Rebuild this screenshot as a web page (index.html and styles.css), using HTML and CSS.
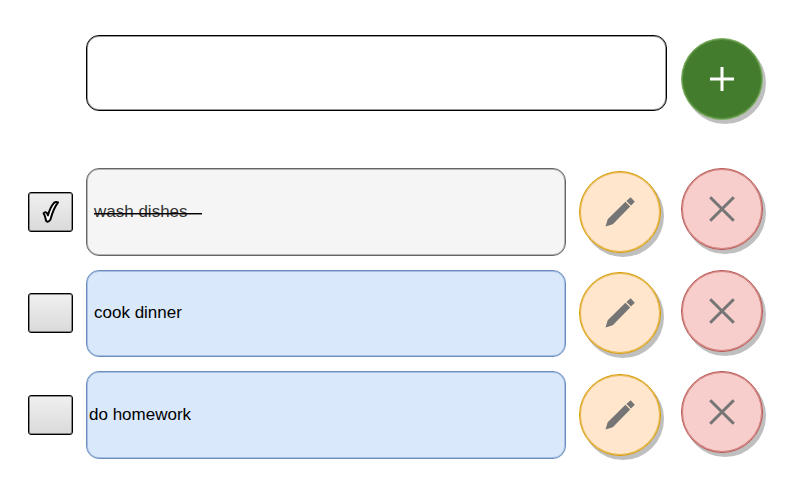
FILE: index.html
```html
<!DOCTYPE html>
<html lang="en">
<head>
<meta charset="utf-8">
<meta name="viewport" content="width=device-width, initial-scale=1">
<title>To-do list</title>
<link rel="stylesheet" href="styles.css">
</head>
<body>
<svg class="symbols" aria-hidden="true">
  <symbol id="tick" viewBox="0 0 18 24">
    <path d="M1.6 13.4C3 11.4 5.2 12 5.9 15.4C7.4 10.2 9.6 5.6 12.2 2.6C13.4 1.8 15 1.8 16 2.4C12.4 7.2 10.2 13 8.6 19C7.8 21.8 4.8 22.6 4 20.4C3.4 18 3.2 15.4 1.6 13.4Z"/>
  </symbol>
  <symbol id="pencil" viewBox="0 0 30 30">
    <path d="M0.5 29.6L2.7 22.3L20.4 4.7L25.2 9.5L7.8 27.2Z M21.4 4L25.6 0.3L29.8 4.8L26 8.6Z"/>
  </symbol>
  <symbol id="cross" viewBox="0 0 26 26">
    <path d="M1.2 1.2L24.8 24.8M24.8 1.2L1.2 24.8"/>
  </symbol>
  <symbol id="plus" viewBox="0 0 24 24">
    <path d="M12 0V24M0 12H24"/>
  </symbol>
</svg>
<main class="app">
  <form class="new-task">
    <input class="new-task-input" type="text" aria-label="New task">
    <button class="round add" type="button" aria-label="Add task"><svg class="icon-plus"><use href="#plus"/></svg></button>
  </form>
  <ul class="tasks">
    <li class="task">
      <span class="check"><input id="task-1" type="checkbox" checked><svg class="tick" aria-hidden="true"><use href="#tick"/></svg></span>
      <div class="card done"><label for="task-1">wash dishes</label></div>
      <div class="actions">
        <button class="round edit" type="button" aria-label="Edit wash dishes"><svg class="icon-pencil"><use href="#pencil"/></svg></button>
        <button class="round delete" type="button" aria-label="Delete wash dishes"><svg class="icon-cross"><use href="#cross"/></svg></button>
      </div>
    </li>
    <li class="task">
      <span class="check"><input id="task-2" type="checkbox"><svg class="tick" aria-hidden="true"><use href="#tick"/></svg></span>
      <div class="card"><label for="task-2">cook dinner</label></div>
      <div class="actions">
        <button class="round edit" type="button" aria-label="Edit cook dinner"><svg class="icon-pencil"><use href="#pencil"/></svg></button>
        <button class="round delete" type="button" aria-label="Delete cook dinner"><svg class="icon-cross"><use href="#cross"/></svg></button>
      </div>
    </li>
    <li class="task">
      <span class="check"><input id="task-3" type="checkbox"><svg class="tick" aria-hidden="true"><use href="#tick"/></svg></span>
      <div class="card tight"><label for="task-3">do homework</label></div>
      <div class="actions">
        <button class="round edit" type="button" aria-label="Edit do homework"><svg class="icon-pencil"><use href="#pencil"/></svg></button>
        <button class="round delete" type="button" aria-label="Delete do homework"><svg class="icon-cross"><use href="#cross"/></svg></button>
      </div>
    </li>
  </ul>
</main>
</body>
</html>
```

FILE: styles.css
```css
* {
  box-sizing: border-box;
}

body {
  margin: 0;
  background: #fff;
  color: #000;
  font-family: "Liberation Sans", Arial, sans-serif;
  font-size: 17px;
  line-height: 20px;
}

.symbols {
  position: absolute;
  width: 0;
  height: 0;
}

.app {
  padding: 35px 29px 22px 28px;
}

.new-task {
  display: flex;
  align-items: flex-start;
  gap: 14px;
  margin: 0 0 48px 58px;
}

.new-task-input {
  flex: 1;
  min-width: 0;
  height: 76px;
  padding: 0 8px;
  border: 1px solid #000;
  border-radius: 13px;
  box-shadow: inset 0 0 0 1px rgba(0, 0, 0, 0.4);
  background: #fff;
  font: inherit;
}

.tasks {
  display: grid;
  grid-auto-rows: 1fr;
  gap: 14px;
  min-height: 291px;
  margin: 0;
  padding: 0;
  list-style: none;
}

.task {
  display: flex;
  align-items: center;
  gap: 13px;
}

.check {
  display: grid;
  flex: none;
  place-items: center;
}

.check > * {
  grid-area: 1 / 1;
}

.check input {
  appearance: none;
  width: 45px;
  height: 40px;
  margin: 0;
  border: 1px solid #000;
  border-radius: 3px;
  box-shadow: inset 0 0 0 1px rgba(0, 0, 0, 0.4);
  background: linear-gradient(#f0f0f0, #dadada);
}

.tick {
  width: 18px;
  height: 24px;
  fill: #fff;
  stroke: #000;
  stroke-width: 2px;
  stroke-linejoin: round;
  visibility: hidden;
  pointer-events: none;
}

.check input:checked + .tick {
  visibility: visible;
}

.card {
  display: flex;
  flex: 1;
  align-items: center;
  align-self: stretch;
  min-width: 0;
  padding: 0 7px;
  border: 1px solid #6c8ebf;
  border-radius: 13px;
  box-shadow: inset 0 0 0 1px rgba(108, 142, 191, 0.45);
  background: #dae8fc;
}

.card.done {
  border-color: #666;
  box-shadow: inset 0 0 0 1px rgba(102, 102, 102, 0.45);
  background: #f5f5f5;
  color: #333;
}

.card.tight {
  padding-left: 2px;
}

.done label {
  position: relative;
  padding-right: 14px;
}

.done label::after {
  content: "";
  position: absolute;
  top: 11px;
  right: 0;
  left: 0;
  height: 2px;
  background: linear-gradient(#000 50%, rgba(0, 0, 0, 0.45) 50%);
}

.actions {
  display: flex;
  flex: none;
  align-items: center;
  align-self: stretch;
  gap: 20px;
}

.round {
  display: grid;
  flex: none;
  place-items: center;
  width: 82px;
  height: 82px;
  padding: 0;
  border: 1px solid;
  border-radius: 50%;
}

.add {
  margin-top: 3px;
  border-color: #82b366;
  background: #437c2d;
  box-shadow: inset 0 0 0 1px rgba(130, 179, 102, 0.45), 3px 4px 0 #bfbfbf;
}

.edit {
  border-color: #d79b00;
  background: #ffe6cc;
  box-shadow: inset 0 0 0 1px rgba(215, 155, 0, 0.6), 3px 4px 0 #bfbfbf;
}

.delete {
  align-self: flex-start;
  border-color: #b85450;
  background: #f8cecc;
  box-shadow: inset 0 0 0 1px rgba(184, 84, 80, 0.6), 3px 4px 0 #bfbfbf;
}

.icon-plus {
  width: 24px;
  height: 24px;
  stroke: #fff;
  stroke-width: 3px;
}

.icon-pencil {
  width: 30px;
  height: 30px;
  fill: #757575;
}

.icon-cross {
  width: 26px;
  height: 26px;
  stroke: #757575;
  stroke-width: 3px;
}
```
